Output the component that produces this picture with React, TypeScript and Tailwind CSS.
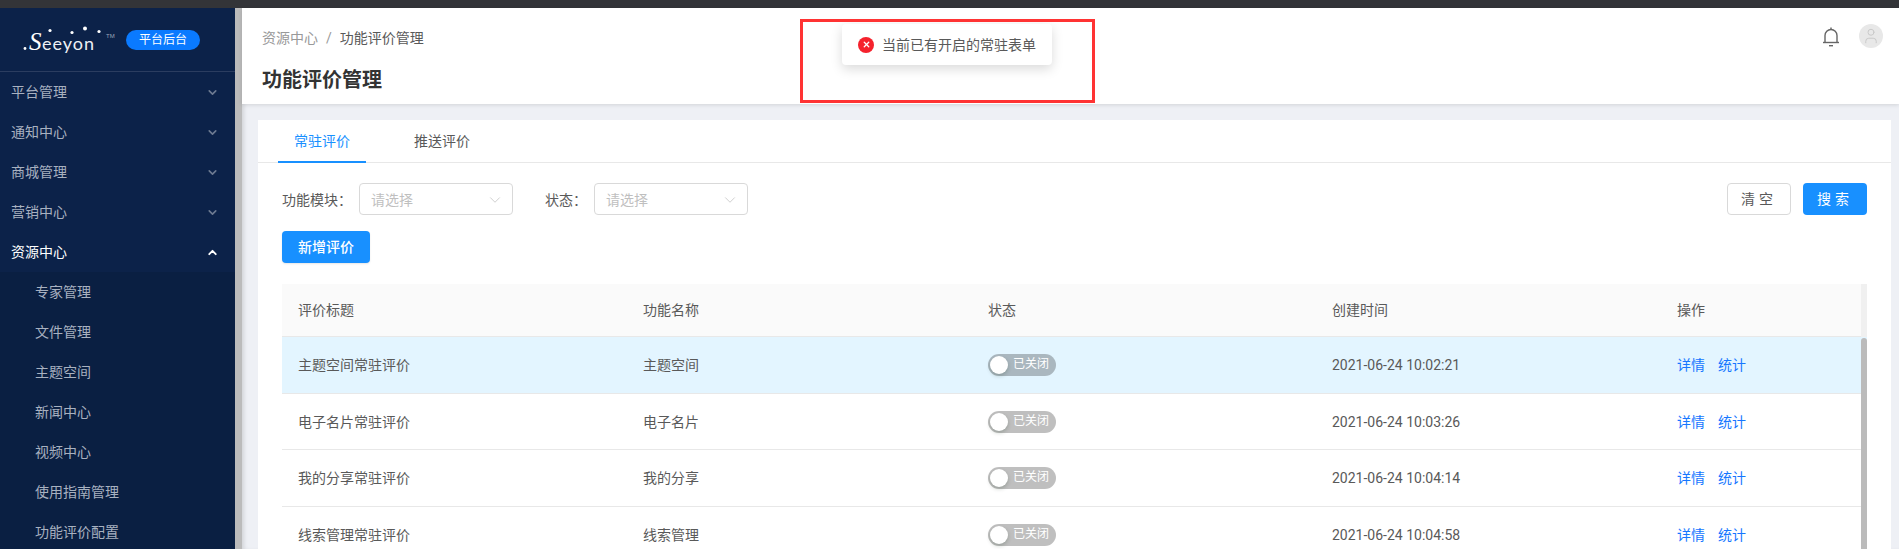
import { ChevronDown, ChevronUp, User, X } from "lucide-react";

const FONT = "font-['Roboto','Noto_Sans_CJK_SC',sans-serif]";

const topMenus = ["平台管理", "通知中心", "商城管理", "营销中心"];
const subMenus = ["专家管理", "文件管理", "主题空间", "新闻中心", "视频中心", "使用指南管理", "功能评价配置"];

const rows = [
  { title: "主题空间常驻评价", name: "主题空间", time: "2021-06-24 10:02:21", h: "h-[57px]", bg: "bg-[#e3f5ff]" },
  { title: "电子名片常驻评价", name: "电子名片", time: "2021-06-24 10:03:26", h: "h-[56px]", bg: "bg-white" },
  { title: "我的分享常驻评价", name: "我的分享", time: "2021-06-24 10:04:14", h: "h-[57px]", bg: "bg-white" },
  { title: "线索管理常驻评价", name: "线索管理", time: "2021-06-24 10:04:58", h: "h-[57px]", bg: "bg-white" },
];

// The logo is simple enough to set as live text with a few dots over it.
function Logo() {
  return (
    <svg width="92" height="30" viewBox="0 0 92 30" className="shrink-0">
      <circle cx="2" cy="23.5" r="1.4" fill="#fff" />
      <text x="6" y="25" fill="#fff" fontSize="25" fontStyle="italic" fontFamily="'Liberation Serif', serif">S</text>
      <text x="19" y="25" fill="#eef1f5" fontSize="18" letterSpacing="1" fontFamily="Lato, sans-serif" fontWeight="400">eeyon</text>
      <circle cx="27" cy="5.5" r="1.6" fill="#fff" />
      <circle cx="49" cy="7.5" r="1.6" fill="#fff" />
      <circle cx="62" cy="3.5" r="2" fill="#fff" />
      <circle cx="76" cy="6.5" r="1.6" fill="#fff" />
      <text x="83" y="13" fill="#9aa5b8" fontSize="6" fontFamily="'Liberation Sans', sans-serif">TM</text>
    </svg>
  );
}

function BellIcon() {
  return (
    <svg width="18" height="20" viewBox="0 0 18 20" fill="none" stroke="#666" strokeWidth="1.4" className="shrink-0">
      <path d="M3 15.5V8.5a6 6 0 0 1 12 0v7" />
      <path d="M1 15.5h16" />
      <path d="M9 .5v2" />
      <path d="M7 18.7h4" />
    </svg>
  );
}

function Sidebar() {
  return (
    <aside className="flex w-[235px] shrink-0 flex-col bg-[#0c2249]">
      <div className="flex h-[64px] shrink-0 items-center border-b border-[#2b3d60] pl-[23px]">
        <Logo />
        <span className="ml-[11px] flex h-5 w-[74px] items-center justify-center rounded-full bg-[#0a7aff] text-[12px] text-white">
          平台后台
        </span>
      </div>
      {topMenus.map((m) => (
        <div key={m} className="flex h-10 shrink-0 items-center justify-between pl-[11px] pr-[16px] text-sm text-[#a8b1c0]">
          {m}
          <ChevronDown size={13} strokeWidth={3} className="text-[#6d7a91]" />
        </div>
      ))}
      <div className="flex h-10 shrink-0 items-center justify-between pl-[11px] pr-[16px] text-sm text-white">
        资源中心
        <ChevronUp size={13} strokeWidth={3.5} className="text-white" />
      </div>
      <div className="flex-1 bg-[#0a1f42]">
        {subMenus.map((m) => (
          <div key={m} className="flex h-10 items-center pl-[35px] text-sm text-[#a8b1c0]">
            {m}
          </div>
        ))}
      </div>
    </aside>
  );
}

function Header() {
  return (
    <header className="flex h-[96px] shrink-0 justify-between bg-white pl-[20px] pr-[16px] shadow-[0_1px_4px_rgba(0,0,0,0.12)]">
      <div className="pt-[20px]">
        <div className="flex h-5 items-center text-sm">
          <span className="text-[#999]">资源中心</span>
          <span className="mx-[8px] text-[#999]">/</span>
          <span className="text-[#595959]">功能评价管理</span>
        </div>
        <h1 className="mt-[18px] text-[20px] font-semibold leading-7 text-[#333]">功能评价管理</h1>
      </div>
      <div className="flex items-start gap-[19px] pt-[16px]">
        <div className="pt-[3px]">
          <BellIcon />
        </div>
        <div className="flex h-6 w-6 items-center justify-center rounded-full bg-[#e8e8e8]">
          <User size={18} strokeWidth={1.3} className="text-[#c8c8c8]" />
        </div>
      </div>
    </header>
  );
}

function Select({ width }: { width: string }) {
  return (
    <div className={`flex h-8 items-center justify-between rounded border border-[#d9d9d9] bg-white pl-[11px] pr-[8px] pt-px text-sm text-[#bfbfbf] ${width}`}>
      请选择
      <ChevronDown size={18} strokeWidth={1} className="text-[#bfbfbf]" />
    </div>
  );
}

function Filters() {
  return (
    <>
      <div className="mt-[20px] flex items-center pl-[24px] pr-[24px] text-sm text-[#595959]">
        <span className="w-[77px] pt-px">功能模块：</span>
        <Select width="w-[154px]" />
        <span className="ml-[32px] w-[49px] pt-px">状态：</span>
        <Select width="w-[154px]" />
        <button className="ml-auto h-8 w-16 rounded border border-[#d9d9d9] bg-white tracking-[4px] text-[#595959]">清空</button>
        <button className="ml-3 h-8 w-16 rounded bg-[#1890ff] tracking-[4px] text-white">搜索</button>
      </div>
      <div className="mt-4 pl-[24px]">
        <button className="h-8 w-[88px] rounded bg-[#1890ff] text-sm font-medium text-white shadow-[0_1px_2px_rgba(0,0,0,0.1)]">新增评价</button>
      </div>
    </>
  );
}

function Table() {
  const cols = "grid grid-cols-[345px_345px_344px_345px_1fr] items-center pl-[16px] pr-[6px]";
  return (
    <div className="relative mx-[24px] mt-[21px] text-sm">
      <div className={`${cols} h-[53px] border-b border-[#e8e8e8] bg-[#fafafa] text-[#595959]`}>
        <span>评价标题</span>
        <span>功能名称</span>
        <span>状态</span>
        <span>创建时间</span>
        <span>操作</span>
      </div>
      {rows.map((r) => (
        <div key={r.title} className={`${cols} ${r.h} ${r.bg} border-b border-[#e8e8e8] text-[#595959]`}>
          <span>{r.title}</span>
          <span>{r.name}</span>
          <span className="flex h-[22px] w-[68px] items-center rounded-full bg-black/25 pl-[2px] text-[12px] text-white">
            <span className="h-[18px] w-[18px] rounded-full bg-white shadow-[0_2px_4px_rgba(0,35,11,0.2)]" />
            <span className="ml-[5px]">已关闭</span>
          </span>
          <span>{r.time}</span>
          <span className="flex gap-[13px] text-[#1677ff]">
            <span>详情</span>
            <span>统计</span>
          </span>
        </div>
      ))}
      {/* Table's own scrollbar: pale track beside the head, grey thumb below it. */}
      <div className="absolute right-0 top-0 h-[53px] w-[6px] bg-[#f0f0f0]" />
      <div className="absolute bottom-0 right-0 top-[54px] w-[6px] rounded-t bg-[#bbbbbb]" />
    </div>
  );
}

export default function App() {
  return (
    <div className={`relative flex h-screen w-full flex-col overflow-hidden bg-[#eef0f5] ${FONT}`}>
      <div className="h-2 shrink-0 bg-[#333438]" />
      <div className="flex min-h-0 flex-1">
        <Sidebar />
        <div className="w-[7px] shrink-0 bg-[#bbbbbb]" />
        <main className="flex min-w-0 flex-1 flex-col shadow-[inset_4px_0_4px_-2px_rgba(0,0,0,0.12)]">
          <Header />
          <section className="ml-[16px] mr-2 mt-4 flex-1 bg-white">
            <div className="flex h-[43px] border-b border-[#e8e8e8] pl-[20px] text-sm">
              <div className="-mb-px flex w-[88px] items-center justify-center border-b-2 border-[#1890ff] text-[#1890ff]">常驻评价</div>
              <div className="ml-[32px] flex w-[88px] items-center justify-center text-[#595959]">推送评价</div>
            </div>
            <Filters />
            <Table />
          </section>
        </main>
      </div>

      {/* Error toast and the red annotation box drawn over the page. */}
      <div className="absolute left-[842px] top-[24px] flex h-[41px] w-[210px] items-center rounded bg-white pl-4 text-sm text-[#595959] shadow-[0_4px_12px_rgba(0,0,0,0.15)]">
        <span className="flex h-4 w-4 items-center justify-center rounded-full bg-[#f5222d]">
          <X size={9} strokeWidth={3.5} className="text-white" />
        </span>
        <span className="ml-2">当前已有开启的常驻表单</span>
      </div>
      <div className="pointer-events-none absolute left-[800px] top-[19px] h-[84px] w-[295px] border-[3px] border-[#ff3333]" />
    </div>
  );
}
